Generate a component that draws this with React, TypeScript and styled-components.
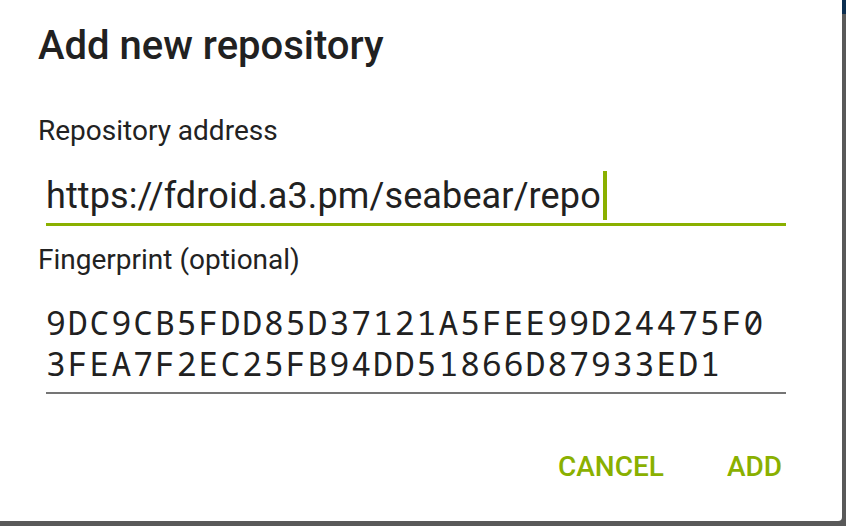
import React from "react";
import styled, { createGlobalStyle } from "styled-components";

const GlobalStyle = createGlobalStyle`
  html, body {
    margin: 0;
    padding: 0;
  }
  body {
    width: 846px;
    height: 526px;
    overflow: hidden;
    background: linear-gradient(to bottom, #0c2e50 0, #0c2e50 14px, #595959 14px, #595959 100%);
    font-family: Roboto, "Noto Sans", sans-serif;
  }
`;

const Dialog = styled.div`
  box-sizing: border-box;
  width: 842px;
  height: 521px;
  background: #ffffff;
  border-bottom-right-radius: 4px;
  padding: 22px 56px 0 38px;
  display: flex;
  flex-direction: column;
`;

const Title = styled.h1`
  margin: 0;
  font-family: Roboto, sans-serif;
  font-weight: 500;
  font-size: 40px;
  line-height: 48px;
  color: #212121;
`;

const Label = styled.div<{ $gap: number }>`
  margin-top: ${(p) => p.$gap}px;
  font-family: Roboto, sans-serif;
  font-weight: 400;
  font-size: 28px;
  line-height: 32px;
  color: #222222;
`;

const Field = styled.div<{ $focused?: boolean; $gap: number }>`
  margin-top: ${(p) => p.$gap}px;
  margin-left: 8px;
  padding-bottom: ${(p) => (p.$focused ? 3 : 8)}px;
  border-bottom: ${(p) => (p.$focused ? "3px solid #8ab000" : "2px solid #757575")};
  font-family: Roboto, sans-serif;
  font-size: 36px;
  letter-spacing: 0.12px;
  line-height: 42px;
  color: #212121;
  white-space: pre;
`;

const MonoField = styled(Field)`
  font-family: "Noto Sans Mono", "DejaVu Sans Mono", monospace;
  font-size: 33px;
  letter-spacing: 2px;
  line-height: 41px;
`;

const Cursor = styled.span`
  display: inline-block;
  width: 4px;
  height: 49px;
  margin-left: 2px;
  background: #8ab000;
  vertical-align: -12px;
`;

const Actions = styled.div`
  margin-top: 57px;
  display: flex;
  justify-content: flex-end;
  gap: 63px;
  padding-right: 4px;
`;

const ActionButton = styled.button`
  border: none;
  background: none;
  padding: 0;
  font-family: Roboto, sans-serif;
  font-weight: 500;
  font-size: 28px;
  line-height: 32px;
  color: #8ab000;
  text-transform: uppercase;
  cursor: pointer;
`;

export default function App() {
  return (
    <>
      <GlobalStyle />
      <Dialog>
        <Title>Add new repository</Title>
        <Label $gap={45}>Repository address</Label>
        <Field $focused $gap={24}>
          https://fdroid.a3.pm/seabear/repo
          <Cursor />
        </Field>
        <Label $gap={18}>Fingerprint (optional)</Label>
        <MonoField $gap={26}>
          {"9DC9CB5FDD85D37121A5FEE99D24475F0\n3FEA7F2EC25FB94DD51866D87933ED1"}
        </MonoField>
        <Actions>
          <ActionButton>Cancel</ActionButton>
          <ActionButton>Add</ActionButton>
        </Actions>
      </Dialog>
    </>
  );
}
